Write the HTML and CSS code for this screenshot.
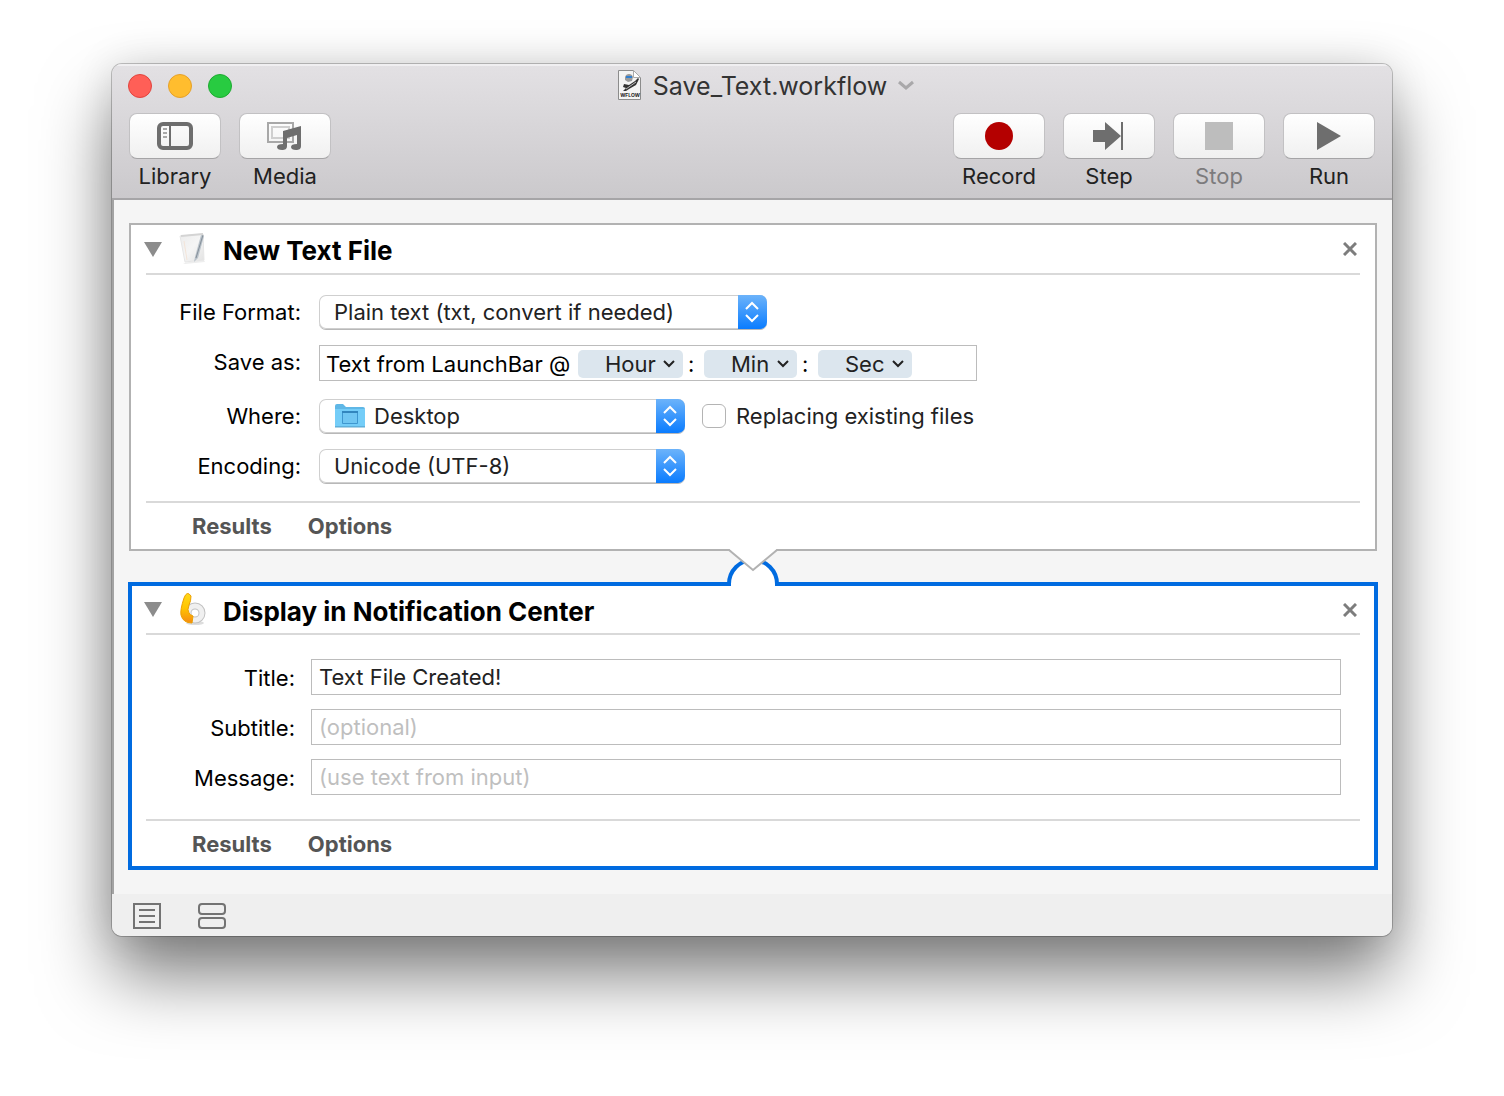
FILE: index.html
```html
<!DOCTYPE html>
<html lang="en">
<head>
<meta charset="utf-8">
<title>Save_Text.workflow</title>
<link rel="stylesheet" href="styles.css">
</head>
<body>
<main class="window">
  <header class="chrome">
    <div class="titlebar">
      <div class="lights">
        <button class="light close" aria-label="Close window"></button>
        <button class="light minimize" aria-label="Minimize window"></button>
        <button class="light maximize" aria-label="Zoom window"></button>
      </div>
      <h1 class="title">
        <svg width="26" height="34" viewBox="0 0 26 34" aria-hidden="true">
          <path d="M1.500 1.500h15l7 7v22h-22z" fill="#f4f4f4" stroke="#8c8c8c"/>
          <path d="M16.500 1.500v7h7z" fill="#fff" stroke="#aaa"/>
          <path d="M8 8q1-3 4-3t4 3l-1 4-4 1-3-2z" fill="#9a9a9a"/>
          <path d="M9 8h6" stroke="#2f7fd0" stroke-width="2"/>
          <path d="M6 22l3-3-3-1 1-3 5 1 6-4 3-3 1 1-3 6-7 4-3 2z" fill="#333"/>
          <path d="M9 20l10-7" stroke="#bbb"/>
          <text x="13" y="28" class="badge">WFLOW</text>
        </svg>
        <span>Save_Text.workflow</span>
        <svg class="title-arrow" width="18" height="12" viewBox="0 0 18 12" aria-hidden="true"><path d="M2 2l7 6 7-6" fill="none" stroke="#a9a8aa" stroke-width="3"/></svg>
      </h1>
    </div>
    <nav class="toolbar">
      <button class="tool"><span class="face"><svg width="36" height="28" viewBox="0 0 36 28"><rect x="2" y="2" width="32" height="24" rx="4" fill="none" stroke="#6e6e6e" stroke-width="4"/><path d="M13 3v22" stroke="#6e6e6e" stroke-width="2"/><path d="M6 7h4M6 11h4M6 15h4" stroke="#a8a8a8" stroke-width="2"/></svg></span><span>Library</span></button>
      <button class="tool"><span class="face"><svg width="36" height="28" viewBox="0 0 36 28"><path d="M1 1h25v19H1z" fill="none" stroke="#a8a8a8" stroke-width="2"/><path d="M5 5h17v11H5z" fill="none" stroke="#cfcfcf" stroke-width="2"/><path d="M16 9l18-5v20c0 3-2 4-5 4s-5-1-5-3 2-3 6-3V13l-10 3v8c0 3-2 4-5 4s-5-1-5-3 2-3 6-3z" fill="#6e6e6e"/></svg></span><span>Media</span></button>
      <span class="spacer"></span>
      <button class="tool"><span class="face"><svg width="28" height="28" viewBox="0 0 28 28"><circle cx="14" cy="14" r="14" fill="#b40000"/></svg></span><span>Record</span></button>
      <button class="tool"><span class="face"><svg width="32" height="28" viewBox="0 0 32 28"><path d="M0 8h12V0l16 14-16 14v-8H0z" fill="#6e6e6e"/><path d="M29 0v28" stroke="#6e6e6e" stroke-width="2"/></svg></span><span>Step</span></button>
      <button class="tool" disabled><span class="face"><svg width="28" height="28" viewBox="0 0 28 28"><path d="M0 0h28v28H0z" fill="#bdbdbd"/></svg></span><span>Stop</span></button>
      <button class="tool"><span class="face"><svg width="24" height="28" viewBox="0 0 24 28"><path d="M0 0l24 14L0 28z" fill="#6e6e6e"/></svg></span><span>Run</span></button>
    </nav>
  </header>

  <div class="canvas">
    <section class="card">
      <header class="card-head">
        <button class="plain" aria-label="Collapse"><svg width="18" height="15" viewBox="0 0 18 15"><path d="M0 0h18L9 15z" fill="#8c8c8c"/></svg></button>
        <svg class="card-icon" width="30" height="34" viewBox="0 0 30 34" aria-hidden="true">
          <defs><linearGradient id="pad" x1="0" y1="0" x2="1" y2="1"><stop offset="0" stop-color="#ececec"/><stop offset=".5" stop-color="#f5f5f5"/><stop offset="1" stop-color="#e2e2e2"/></linearGradient></defs>
          <path d="M5 31l21-3 1 2-20 2z" fill="#eee"/>
          <path d="M2 4l23-2 1 26-19 2z" fill="url(#pad)" stroke="#e6e6e6"/>
          <path d="M3 4l22-2" stroke="#d4d4d4" stroke-width="2"/>
          <path d="M6 9l3 19" stroke="#f3e4d8"/>
          <path d="M23 3l3 1-6 22-4 4 1-5z" fill="#b9c2ca"/><path d="M25 3l-7 23" stroke="#858f99"/>
        </svg>
        <h2>New Text File</h2>
        <button class="plain" aria-label="Remove action"><svg width="14" height="14" viewBox="0 0 14 14"><path d="M1 1l12 12M13 1L1 13" stroke="#7d7d7d" stroke-width="3"/></svg></button>
      </header>
      <form class="fields file-fields">
        <label for="format">File Format:</label>
        <div class="popup wide"><select id="format"><option>Plain text (txt, convert if needed)</option></select><span class="arrows"><svg width="15" height="22" viewBox="0 0 15 22"><path d="M1 8l6-6 6 6M1 14l6 6 6-6"/></svg></span></div>
        <label for="name">Save as:</label>
        <div class="token-field">
          <input id="name" value="Text from LaunchBar @">
          <span class="token"><select aria-label="Hour"><option>Hour</option></select><svg width="12" height="8" viewBox="0 0 12 8"><path d="M1 1l5 5 5-5"/></svg></span><span class="colon">:</span>
          <span class="token"><select aria-label="Minute"><option>Min</option></select><svg width="12" height="8" viewBox="0 0 12 8"><path d="M1 1l5 5 5-5"/></svg></span><span class="colon">:</span>
          <span class="token"><select aria-label="Second"><option>Sec</option></select><svg width="12" height="8" viewBox="0 0 12 8"><path d="M1 1l5 5 5-5"/></svg></span>
        </div>
        <label for="where">Where:</label>
        <div class="where">
          <div class="popup with-icon">
            <svg class="folder" width="30" height="24" viewBox="0 0 30 24" aria-hidden="true"><path d="M0 2q0-2 2-2h6l3 3h17q2 0 2 2v18H0z" fill="#5fb7e6"/><path d="M0 5h30v17H0z" fill="#74cdf8"/><path d="M0 23h30" stroke="#60a9d0"/><path d="M7.500 7.500h15v12h-15z" fill="#70c6f2" stroke="#3f97cf"/><path d="M7 8h16" stroke="#3286bd" stroke-width="2"/></svg>
            <select id="where"><option>Desktop</option></select><span class="arrows"><svg width="15" height="22" viewBox="0 0 15 22"><path d="M1 8l6-6 6 6M1 14l6 6 6-6"/></svg></span>
          </div>
          <label class="check"><input type="checkbox"><span>Replacing existing files</span></label>
        </div>
        <label for="encoding">Encoding:</label>
        <div class="popup"><select id="encoding"><option>Unicode (UTF-8)</option></select><span class="arrows"><svg width="15" height="22" viewBox="0 0 15 22"><path d="M1 8l6-6 6 6M1 14l6 6 6-6"/></svg></span></div>
      </form>
      <footer class="card-foot"><button class="plain">Results</button><button class="plain">Options</button></footer>
    </section>

    <div class="connector"><svg width="60" height="37" viewBox="0 0 60 37" aria-hidden="true">
      <path d="M6 37a24 24 0 0 1 48 0z" fill="#fff"/>
      <path d="M4 35H6a24 24 0 0 1 48 0H56" fill="none" stroke="#006be0" stroke-width="4"/>
      <path d="M6 0h48L30 21z" fill="#fff"/>
      <path d="M5 1h1l24 20L54 1h1" fill="none" stroke="#b2b2b2" stroke-width="2"/>
    </svg></div>

    <section class="card selected">
      <header class="card-head">
        <button class="plain" aria-label="Collapse"><svg width="18" height="15" viewBox="0 0 18 15"><path d="M0 0h18L9 15z" fill="#8c8c8c"/></svg></button>
        <svg class="card-icon" width="30" height="34" viewBox="0 0 30 34" aria-hidden="true">
          <defs><linearGradient id="stem" x1="0" y1="0" x2="0" y2="1"><stop offset="0" stop-color="#ffd91a"/><stop offset=".5" stop-color="#ffc400"/><stop offset="1" stop-color="#f58a12"/></linearGradient></defs>
          <ellipse cx="17" cy="30" rx="9" ry="2" fill="#ddd"/>
          <circle cx="17" cy="20" r="7" fill="none" stroke="#c2c2c2" stroke-width="7"/>
          <circle cx="17" cy="20" r="7" fill="none" stroke="#f0f0f0" stroke-width="5"/>
          <path d="M6 5q3-8 7-2 0 5-2 9-2 5 0 8 1 2 4 3l-1 7Q5 30 3 22 2 17 6 5z" fill="url(#stem)" stroke="#eda000"/>
        </svg>
        <h2>Display in Notification Center</h2>
        <button class="plain" aria-label="Remove action"><svg width="14" height="14" viewBox="0 0 14 14"><path d="M1 1l12 12M13 1L1 13" stroke="#7d7d7d" stroke-width="3"/></svg></button>
      </header>
      <form class="fields note-fields">
        <label for="note-title">Title:</label><input class="text" id="note-title" value="Text File Created!">
        <label for="subtitle">Subtitle:</label><input class="text" id="subtitle" placeholder="(optional)">
        <label for="message">Message:</label><input class="text" id="message" placeholder="(use text from input)">
      </form>
      <footer class="card-foot"><button class="plain">Results</button><button class="plain">Options</button></footer>
    </section>
  </div>

  <footer class="statusbar">
    <button class="plain" aria-label="Show log"><svg width="28" height="26" viewBox="0 0 28 26"><path d="M1 1h26v24H1zM6 7h16M6 13h16M6 19h16" fill="none" stroke="#737373" stroke-width="2"/></svg></button>
    <button class="plain" aria-label="Show variables"><svg width="28" height="26" viewBox="0 0 28 26"><rect x="1" y="1" width="26" height="10" rx="3" fill="none" stroke="#737373" stroke-width="2"/><rect x="1" y="15" width="26" height="10" rx="3" fill="none" stroke="#737373" stroke-width="2"/></svg></button>
  </footer>
</main>
</body>
</html>
```
FILE: styles.css
```css
* { box-sizing: border-box; }

body {
  margin: 0;
  padding: 64px 112px 160px;
  background: #fff;
  color: #000;
  font: 22px/34px Inter, "Liberation Sans", sans-serif;
}

button, input, select {
  margin: 0;
  padding: 0;
  border: 0;
  background: none;
  color: inherit;
  font: inherit;
}

svg { display: block; flex: none; }
.plain { display: flex; }

.window {
  overflow: hidden;
  border-radius: 10px;
  background: #f5f5f5;
  box-shadow: 0 0 0 1px rgba(0, 0, 0, .22), 0 0 40px rgba(0, 0, 0, .12), 0 40px 70px rgba(0, 0, 0, .5);
}

/* Title bar and toolbar */
.chrome {
  border-bottom: 2px solid #a6a5a7;
  background: linear-gradient(#e3e1e4, #cbc9cc);
  box-shadow: inset 0 2px 0 #f0eff1;
}
.titlebar {
  display: grid;
  grid-template-columns: 1fr auto 1fr;
  align-items: center;
  height: 49px;
  padding: 0 16px 5px;
}
.lights { display: flex; gap: 16px; }
.light { width: 24px; height: 24px; border: 1px solid; border-radius: 50%; }
.close { border-color: #e0443e; background: #ff5f57; }
.minimize { border-color: #e5a029; background: #ffbd2e; }
.maximize { border-color: #1eaa31; background: #28cb41; }
.title {
  display: flex;
  align-items: center;
  gap: 10px;
  margin: 0;
  color: #333;
  font-size: 25px;
  font-weight: 400;
}
.title-arrow { margin-right: -28px; }
.badge { fill: #222; font-size: 5px; font-weight: 700; text-anchor: middle; }

.toolbar { display: flex; gap: 18px; padding: 0 17px 5px; }
.spacer { flex: 1; }
.tool {
  display: flex;
  flex-direction: column;
  align-items: center;
  width: 92px;
  color: #222;
}
.tool:disabled { color: #7c7b7d; }
.face {
  display: flex;
  align-items: center;
  justify-content: center;
  width: 92px;
  height: 46px;
  border: 1px solid #c2c1c3;
  border-bottom-color: #a5a4a6;
  border-radius: 8px;
  background: linear-gradient(#fff, #f0f0f0);
}

/* Workflow actions */
.canvas { padding: 23px 14px 24px 16px; box-shadow: inset 2px 0 0 #a3a3a3; }
.card { margin: 0 1px; padding: 0 15px; border: 2px solid #b2b2b2; background: #fff; }
.card.selected { margin: 0; padding: 0 14px; border: 4px solid #006be0; }
.connector {
  position: relative;
  z-index: 1;
  display: flex;
  justify-content: center;
  margin: -2px 0 -4px;
}
.card-head {
  display: flex;
  align-items: center;
  height: 50px;
  padding-right: 3px;
  border-bottom: 2px solid #d9d9d9;
}
.selected .card-head { height: 49px; }
.card-head .plain:first-child { margin-left: -2px; }
.card-icon { margin: 0 15px 0 16px; }
h2 { flex: 1; margin: 0; padding-top: 4px; font-size: 26px; font-weight: 700; }
.card-foot {
  display: flex;
  gap: 36px;
  height: 48px;
  padding: 6px 46px;
  border-top: 2px solid #d9d9d9;
  color: #555;
  font-weight: 700;
}
.selected .card-foot { height: 47px; }

.fields { display: grid; align-items: start; }
.fields > label { text-align: right; }
.file-fields { grid-template-columns: 155px 1fr; gap: 16px 18px; padding: 20px 0 18px; }
.note-fields { grid-template-columns: 149px 1fr; gap: 14px 16px; padding: 24px 19px 24px 0; }
.note-fields > label { padding-top: 2px; }

.popup {
  display: grid;
  grid-template-columns: 1fr 29px;
  width: 366px;
  height: 34px;
  overflow: hidden;
  border-radius: 7px;
  background: #fff;
  color: #222;
  box-shadow: inset 0 0 0 1px #cfcfcf, 0 1px 0 #b8b8b8;
}
.popup.wide { width: 448px; }
.popup select {
  grid-area: 1 / 1 / 2 / 3;
  appearance: none;
  padding: 0 30px 0 15px;
}
.popup.with-icon select { padding-left: 55px; }
.folder { grid-area: 1 / 1; align-self: center; margin-left: 16px; }
.arrows {
  grid-area: 1 / 2;
  display: flex;
  align-items: center;
  justify-content: center;
  background: linear-gradient(#6cb3fa, #0a7cff);
  pointer-events: none;
}
.arrows path { fill: none; stroke: #fff; stroke-width: 2; }

.token-field {
  display: flex;
  align-items: center;
  width: 658px;
  height: 36px;
  margin-bottom: 2px;
  padding: 2px 6px 0;
  border: 1px solid #bcbcbc;
}
.token-field input { width: 252px; height: 32px; }
.token { display: grid; align-items: center; border-radius: 5px; background: #dce6ee; color: #222; }
.token select {
  grid-area: 1 / 1;
  appearance: none;
  height: 28px;
  padding: 0 27px;
  line-height: 28px;
}
.token svg { grid-area: 1 / 1; justify-self: end; margin-right: 8px; pointer-events: none; }
.token path { fill: none; stroke: #222; stroke-width: 2; }
.colon { width: 21px; padding-left: 5px; }

.where { display: flex; gap: 17px; }
.check { display: flex; align-items: center; gap: 10px; color: #222; }
.check input {
  appearance: none;
  width: 24px;
  height: 24px;
  border: 1px solid #b4b4b4;
  border-radius: 6px;
  background: #fff;
}

.text { width: 100%; height: 36px; padding: 0 7px; border: 1px solid #bcbcbc; color: #222; }
.text::placeholder { color: #bfbfbf; opacity: 1; }

.statusbar {
  display: flex;
  align-items: center;
  gap: 37px;
  height: 42px;
  padding: 2px 21px 0;
  background: #efefef;
}
```
